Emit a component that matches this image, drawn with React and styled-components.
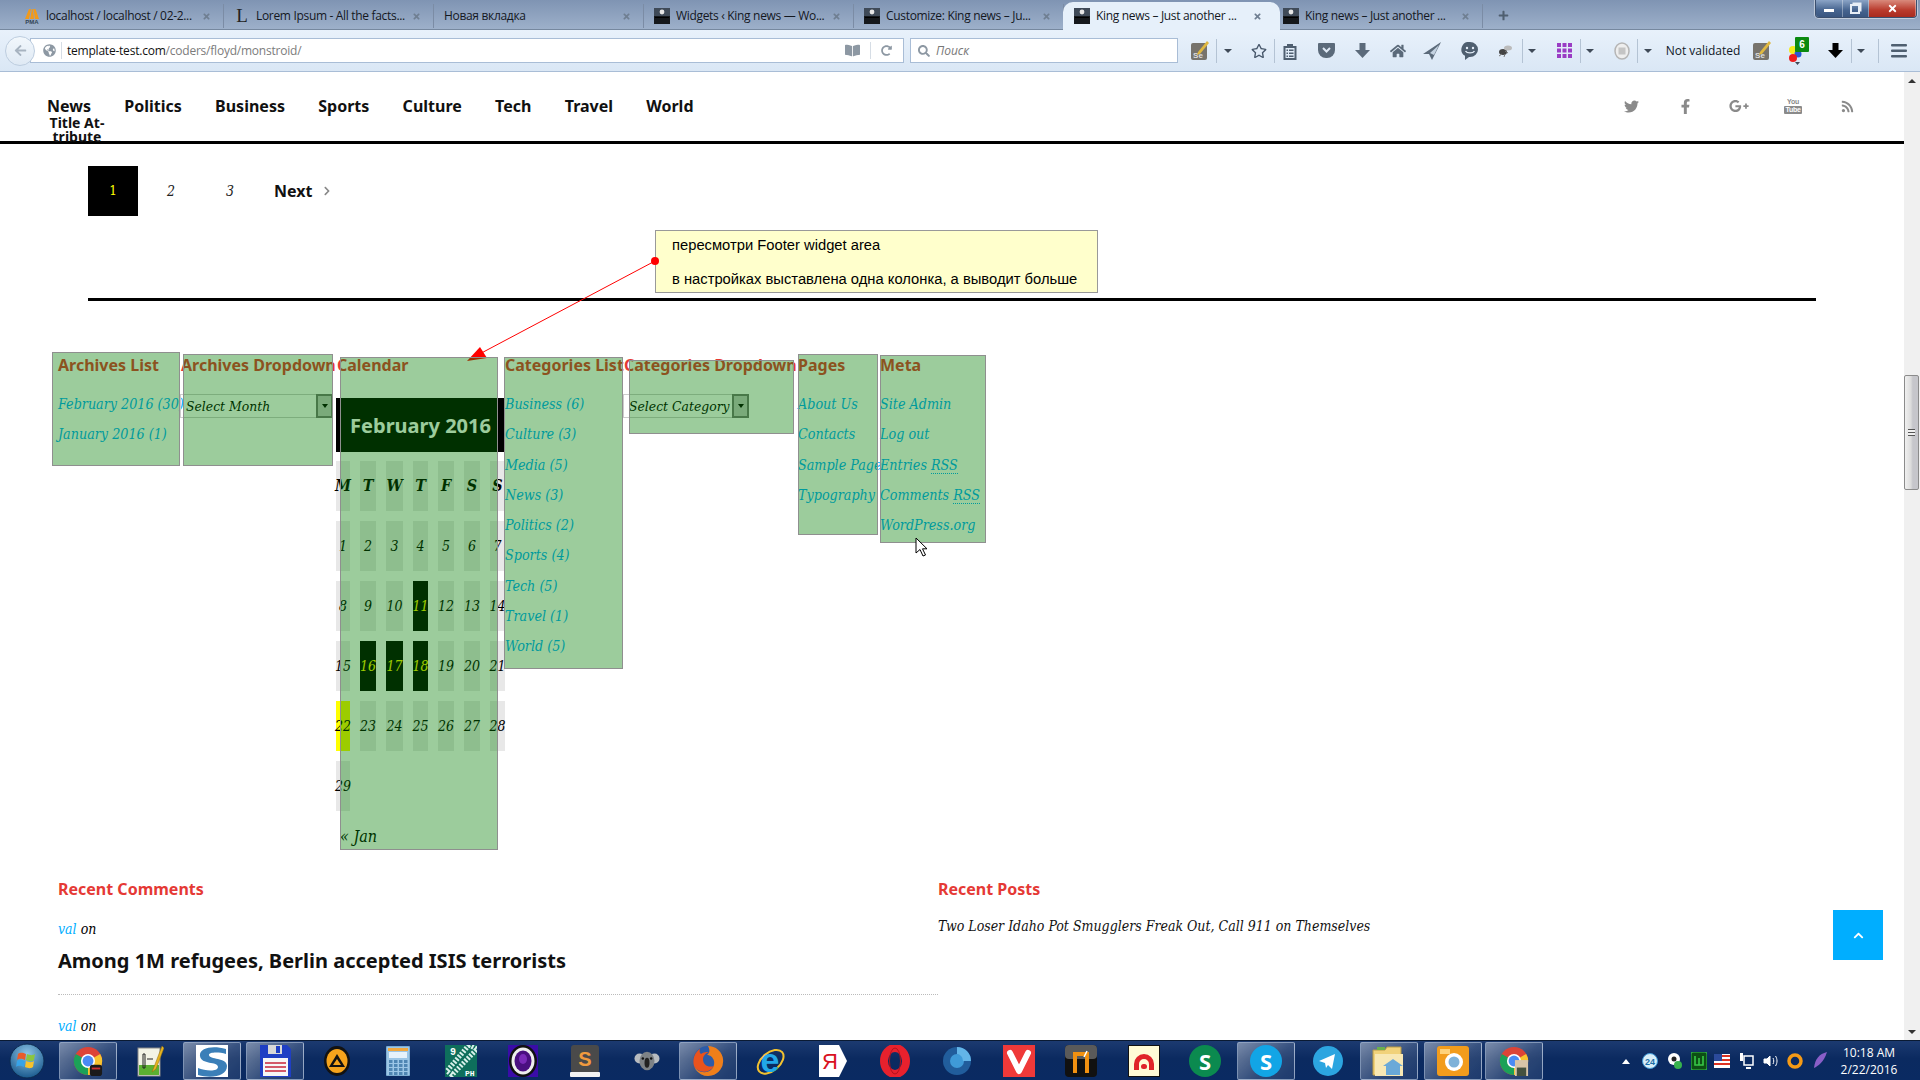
import styled, { createGlobalStyle } from 'styled-components'
import {
	FaTwitter,
	FaFacebookF,
	FaGooglePlusG,
	FaRss,
	FaChevronRight,
	FaChevronUp,
	FaSearch,
	FaArrowLeft,
	FaRedoAlt,
	FaBookOpen,
	FaGlobeAmericas,
	FaRegStar,
	FaHome,
	FaPlus,
	FaTimes,
} from 'react-icons/fa'

const GlobalStyle = createGlobalStyle`
	html, body {
		margin: 0;
		padding: 0;
		background: #fff;
	}
	* {
		box-sizing: border-box;
	}
`

const serif = `'DejaVu Serif Condensed', 'DejaVu Serif', serif`

// lays items out by flow: turns wanted centres into left margins
const placeInRow = (items, start) => {
	let prevEnd = start
	return items.map(item => {
		const ml = item.c - item.w / 2 - prevEnd
		prevEnd = item.c + item.w / 2
		return { ...item, ml }
	})
}

const Thumb = () => (
	<svg width='16' height='16' viewBox='0 0 16 16'>
		<rect width='16' height='16' fill='#15181c' />
		<rect width='16' height='8' fill='#3f4a58' />
		<circle cx='8' cy='4' r='2.4' fill='#e6e6e6' />
		<rect x='1' y='9' width='14' height='1' fill='#000' />
	</svg>
)

const PmaIcon = () => (
	<svg width='16' height='16' viewBox='0 0 16 16'>
		<path d='M1 11 5 1h2l-2 10zM6 11 8 1h1l1 10zM11 11 9.500 1h2L15 11z' fill='#f29a1a' />
		<text x='8' y='16' fontSize='6' fontWeight='700' fill='#345' textAnchor='middle' fontFamily='Liberation Sans, sans-serif'>
			PMA
		</text>
	</svg>
)

const LoremIcon = styled.span`
	width: 16px;
	font: 400 19px/20px 'Liberation Serif', serif;
	color: #222;
	text-align: center;
`

const tabs = [
	{ title: 'localhost / localhost / 02-2...', icon: <PmaIcon /> },
	{ title: 'Lorem Ipsum - All the facts...', icon: <LoremIcon>L</LoremIcon> },
	{ title: 'Новая вкладка' },
	{ title: 'Widgets ‹ King news — Wo...', icon: <Thumb /> },
	{ title: 'Customize: King news – Ju...', icon: <Thumb /> },
	{ title: 'King news – Just another ...', icon: <Thumb />, active: true },
	{ title: 'King news – Just another ...', icon: <Thumb /> },
]

const DropArrow = styled.span`
	display: block;
	width: 0;
	height: 0;
	border-left: 4px solid transparent;
	border-right: 4px solid transparent;
	border-top: 4px solid #3f4a58;
`

const ToolSep = styled.span`
	display: block;
	width: 1px;
	height: 24px;
	background: #b4c3d4;
`

const SeIcon = () => (
	<svg width='20' height='22' viewBox='0 0 20 22'>
		<rect x='1' y='3' width='16' height='17' rx='2' fill='#77736c' />
		<path d='M8 12 17 1l2 2-9 11-3 1z' fill='#e0b840' />
		<text x='8' y='18' fontSize='8' fontWeight='700' fill='#ddd' textAnchor='middle' fontFamily='Liberation Sans, sans-serif'>
			Se
		</text>
	</svg>
)

const ClipIcon = () => (
	<svg width='16' height='18' viewBox='0 0 16 18' fill='#4f5f70'>
		<path d='M5 2h6v2h3.500v14h-13V4H5zM3.500 6v10h9V6z' />
		<path d='M4.500 7.500h1.500v1.500H4.500zM7 7.500h4.500v1.500H7zM4.500 10.500h1.500V12H4.500zM7 10.500h4.500V12H7zM4.500 13.500h1.500V15H4.500zM7 13.500h4.500V15H7z' />
	</svg>
)

const PocketIcon = () => (
	<svg width='17' height='15' viewBox='0 0 17 15'>
		<path d='M1 0h15a1 1 0 0 1 1 1v6a8 8 0 0 1-8 8h-1a8 8 0 0 1-8-8V1a1 1 0 0 1 1-1z' fill='#5b6a7a' />
		<path d='m5 5 3.500 3.500L12 5' stroke='#dfe9f5' strokeWidth='2' fill='none' />
	</svg>
)

const BlockArrow = ({ color }) => (
	<svg width='15' height='15' viewBox='0 0 15 15' fill={color}>
		<path d='M4.500 0h6v7h4.500l-7.500 8L0 7h4.500z' />
	</svg>
)

const SendIcon = () => (
	<svg width='20' height='18' viewBox='0 0 20 18'>
		<path d='M19 0 1 12l6 0 3 6zM9 11l1 4 2-2z' fill='#5b6a7a' />
		<path d='M17 3 8 11l4 2z' fill='#c5d3e2' />
	</svg>
)

const ChatIcon = () => (
	<svg width='18' height='18' viewBox='0 0 18 18'>
		<path d='M9 0a8 7.500 0 0 1 0 15H8l-4 3v-4.200A7.500 7.500 0 0 1 9 0z' fill='#4f5f70' />
		<circle cx='6' cy='6' r='1.200' fill='#e4eef9' />
		<circle cx='12' cy='6' r='1.200' fill='#e4eef9' />
		<path d='M4.500 9c1.500 2.500 7.500 2.500 9 0' stroke='#e4eef9' strokeWidth='1.400' fill='none' />
	</svg>
)

const FlyIcon = () => (
	<svg width='16' height='14' viewBox='0 0 16 14'>
		<ellipse cx='6' cy='8' rx='4' ry='3' fill='#444' />
		<ellipse cx='11' cy='4' rx='4' ry='2.500' fill='#bbb' />
		<path d='M2 12 5 10M7 13l1-3M11 9 8 7' stroke='#777' />
	</svg>
)

const GridIcon = () => (
	<svg width='15' height='15' viewBox='0 0 15 15' fill='#9a3cc4'>
		{[0, 5.5, 11].map(x =>
			[0, 5.5, 11].map(y => <rect key={`${x}-${y}`} x={x} y={y} width='4' height='4' />)
		)}
	</svg>
)

const StopIcon = () => (
	<svg width='16' height='18' viewBox='0 0 16 18'>
		<ellipse cx='8' cy='9' rx='7' ry='8' fill='#eee' stroke='#b5b5b5' strokeWidth='1.500' />
		<rect x='4.500' y='5.500' width='7' height='7' fill='#c4c4c4' />
	</svg>
)

const DotsIcon = () => (
	<svg width='28' height='28' viewBox='0 0 28 28'>
		<circle cx='7' cy='13' r='4' fill='#f5ee1e' />
		<circle cx='12' cy='17' r='3.500' fill='#2a5ad8' />
		<circle cx='7' cy='21' r='4' fill='#ee1c1c' />
		<path d='m9 25 5 0-2.500 3z' fill='#3f4a58' />
		<rect x='9' y='0' width='14' height='15' rx='1' fill='#0b8a10' />
		<text x='16' y='11' fontSize='10' fontWeight='700' fill='#fff' textAnchor='middle' fontFamily='Liberation Sans, sans-serif'>
			6
		</text>
	</svg>
)

const BurgerIcon = () => (
	<svg width='16' height='14' viewBox='0 0 16 14' fill='#4f5f70'>
		<rect width='16' height='2.500' rx='1' />
		<rect y='5.500' width='16' height='2.500' rx='1' />
		<rect y='11' width='16' height='2.500' rx='1' />
	</svg>
)

const StatusText = styled.span`
	font: 400 12px/16px 'Open Sans', sans-serif;
	color: #101828;
	white-space: nowrap;
`

const toolItems = placeInRow(
	[
		{ c: 1200, w: 20, node: <SeIcon /> },
		{ c: 1216, w: 1, node: <ToolSep /> },
		{ c: 1228, w: 8, node: <DropArrow /> },
		{ c: 1259, w: 16, node: <FaRegStar size={16} color='#46566a' /> },
		{ c: 1274, w: 1, node: <ToolSep /> },
		{ c: 1290, w: 16, node: <ClipIcon /> },
		{ c: 1326, w: 17, node: <PocketIcon /> },
		{ c: 1362, w: 15, node: <BlockArrow color='#5b6a7a' /> },
		{ c: 1398, w: 16, node: <FaHome size={16} color='#5b6a7a' /> },
		{ c: 1432, w: 20, node: <SendIcon /> },
		{ c: 1470, w: 18, node: <ChatIcon /> },
		{ c: 1505, w: 16, node: <FlyIcon /> },
		{ c: 1522, w: 1, node: <ToolSep /> },
		{ c: 1532, w: 8, node: <DropArrow /> },
		{ c: 1564, w: 15, node: <GridIcon /> },
		{ c: 1580, w: 1, node: <ToolSep /> },
		{ c: 1590, w: 8, node: <DropArrow /> },
		{ c: 1622, w: 16, node: <StopIcon /> },
		{ c: 1637, w: 1, node: <ToolSep /> },
		{ c: 1648, w: 8, node: <DropArrow /> },
		{ c: 1703, w: 72, node: <StatusText>Not validated</StatusText> },
		{ c: 1762, w: 20, node: <SeIcon /> },
		{ c: 1800, w: 28, node: <DotsIcon /> },
		{ c: 1835, w: 15, node: <BlockArrow color='#000' /> },
		{ c: 1851, w: 1, node: <ToolSep /> },
		{ c: 1861, w: 8, node: <DropArrow /> },
		{ c: 1878, w: 1, node: <ToolSep /> },
		{ c: 1899, w: 16, node: <BurgerIcon /> },
	],
	1178
)

// taskbar drawings
const Chrome = ({ badge }) => (
	<svg width='30' height='30' viewBox='0 0 32 32'>
		<circle cx='16' cy='16' r='15' fill='#dc4437' />
		<path d='M16 16 29 8.500A15 15 0 0 1 16 31Z' fill='#f7c42f' />
		<path d='M16 16V31A15 15 0 0 1 3 8.500Z' fill='#1ba158' />
		<circle cx='16' cy='16' r='7.500' fill='#fff' />
		<circle cx='16' cy='16' r='5.800' fill='#4a8af4' />
		{badge === 'ninja' && <rect x='18' y='20' width='13' height='12' rx='3' fill='#1a1a1a' />}
		{badge === 'ninja' && <rect x='20' y='23' width='9' height='2' fill='#c33' />}
		{badge === 'face' && <rect x='17' y='15' width='14' height='17' fill='#d8c4a8' />}
		{badge === 'face' && <rect x='19' y='23' width='10' height='9' fill='#45513f' />}
	</svg>
)

const Orb = () => (
	<svg width='36' height='36' viewBox='0 0 36 36'>
		<defs>
			<radialGradient id='orbFill' cx='50%' cy='30%' r='70%'>
				<stop offset='0%' stopColor='#8fc6e8' />
				<stop offset='100%' stopColor='#1a5a8e' />
			</radialGradient>
		</defs>
		<circle cx='18' cy='18' r='17' fill='url(#orbFill)' stroke='#0c2a50' />
		<path d='M9 11c3-2 5-1 8 0l-1 6c-3-1-5-2-8 0z' fill='#ea5b2a' />
		<path d='M18 11c3 1 5 2 8 0l-1 6c-3 2-5 1-8 0z' fill='#8cc63f' />
		<path d='M8 18c3-2 5-1 8 0l-1 6c-3-1-5-2-8 0z' fill='#37a3e8' />
		<path d='M17 18c3 1 5 2 8 0l-1 6c-3 2-5 1-8 0z' fill='#f8c22d' />
	</svg>
)

const NotepadIcon = () => (
	<svg width='28' height='32' viewBox='0 0 28 32'>
		<rect x='2' y='3' width='22' height='28' fill='#f3f3e6' stroke='#888' />
		<rect x='3' y='20' width='20' height='10' fill='#5cb031' />
		<path d='M7 9v14h2V9zM11 14h6' stroke='#222' strokeWidth='1' fill='none' />
		<path d='M26 1 18 22l-2 5 4-3 8-21z' fill='#e6b422' stroke='#8a6a10' strokeWidth='.5' />
	</svg>
)

const SBox = () => (
	<svg width='32' height='32' viewBox='0 0 32 32'>
		<rect width='32' height='32' fill='#fff' />
		<path d='M30 4C16 0 3 3 4 11c1 9 18 5 18 11 0 5-13 4-20 1v7c14 4 29 1 29-9 0-9-18-6-18-11 0-3 10-3 17-1z' fill='#3b7fb8' />
	</svg>
)

const Floppy = () => (
	<svg width='32' height='32' viewBox='0 0 32 32'>
		<path d='M1 0h27l4 4v28H1z' fill='#1f3fc4' />
		<rect x='9' y='0' width='14' height='9' fill='#d8d8d8' />
		<rect x='17' y='1' width='4' height='7' fill='#1f3fc4' />
		<rect x='4' y='13' width='25' height='18' fill='#f6f6f6' />
		<path d='M6 18h21M6 22h21M6 26h21' stroke='#c8243a' strokeWidth='1.500' />
	</svg>
)

const Aimp = () => (
	<svg width='30' height='30' viewBox='0 0 30 30'>
		<ellipse cx='15' cy='15' rx='13' ry='15' fill='#121212' />
		<ellipse cx='15' cy='15' rx='10.500' ry='12' fill='#f5a31c' />
		<path d='M15 8 23 21H7z' fill='#121212' />
		<path d='M15 13 19 19H11z' fill='#f5a31c' />
	</svg>
)

const Calc = () => (
	<svg width='24' height='30' viewBox='0 0 24 30'>
		<rect width='24' height='30' rx='1.500' fill='#9cc6e6' stroke='#5f93bd' />
		<rect x='2' y='2' width='20' height='3' fill='#f0a840' />
		<rect x='3' y='6' width='18' height='6' fill='#e6f2fb' />
		{[14, 18, 22, 26].map(y =>
			[3, 8, 13, 18].map(x => <rect key={`${x}-${y}`} x={x} y={y} width='3.500' height='3' fill='#4f86b3' />)
		)}
	</svg>
)

const NinePh = () => (
	<svg width='32' height='32' viewBox='0 0 32 32'>
		<rect width='32' height='32' fill='#0e6f5c' />
		<path d='M24 0 2 26l5 4L32 4z' fill='none' stroke='#d8f0ea' strokeWidth='5' strokeDasharray='2 1.500' />
		<text x='5' y='10' fontSize='10' fontWeight='700' fill='#fff' fontFamily='Liberation Mono, monospace'>
			9
		</text>
		<text x='20' y='31' fontSize='8' fontWeight='700' fill='#fff' fontFamily='Liberation Mono, monospace'>
			PH
		</text>
	</svg>
)

const Lens = () => (
	<svg width='30' height='32' viewBox='0 0 30 32'>
		<rect width='30' height='32' fill='#3a0ca8' />
		<ellipse cx='15' cy='16' rx='14' ry='16' fill='#111' />
		<ellipse cx='15' cy='16' rx='11.500' ry='13.500' fill='#eee' />
		<ellipse cx='15' cy='16' rx='8.500' ry='10.500' fill='#4a0f80' />
		<ellipse cx='15' cy='14' rx='4' ry='5' fill='#7a2ab8' />
	</svg>
)

const Sublime = () => (
	<svg width='30' height='32' viewBox='0 0 30 32'>
		<rect x='1' y='0' width='28' height='28' rx='3' fill='#4a4a4a' />
		<rect x='0' y='27' width='30' height='5' rx='1' fill='#f2f2f2' />
		<text x='15' y='21' fontSize='20' fontWeight='700' fill='#f09a3e' textAnchor='middle' fontFamily='Liberation Sans, sans-serif'>
			S
		</text>
	</svg>
)

const Koala = () => (
	<svg width='26' height='20' viewBox='0 0 30 24'>
		<circle cx='6' cy='9' r='6' fill='#b8bcc0' />
		<circle cx='24' cy='9' r='6' fill='#b8bcc0' />
		<ellipse cx='15' cy='12' rx='9' ry='11' fill='#7d8286' />
		<ellipse cx='15' cy='14' rx='3' ry='6' fill='#222' />
		<circle cx='10' cy='9' r='1.500' fill='#111' />
		<circle cx='20' cy='9' r='1.500' fill='#111' />
	</svg>
)

const Firefox = () => (
	<svg width='32' height='32' viewBox='0 0 32 32'>
		<circle cx='16' cy='16' r='15' fill='#2c5ba8' />
		<path d='M16 1a15 15 0 1 1-14 20c2 4 7 7 12 6 6-1 9-6 8-11-1-4-4-6-7-6 3-2 3-5 1-9z' fill='#ef7f1a' />
		<path d='M2 21C0 14 3 7 8 4c-1 3 0 4 1 5 3-2 5-2 8-2-3 1-6 4-6 7 0 6 5 9 11 7-3 5-9 7-14 5-3-1-5-3-6-5z' fill='#e9531d' />
	</svg>
)

const Ie = () => (
	<svg width='32' height='32' viewBox='0 0 32 32'>
		<ellipse cx='16' cy='17' rx='15' ry='9' fill='none' stroke='#f2c230' strokeWidth='2' transform='rotate(-40 16 16)' />
		<text x='16' y='27' fontSize='34' fontWeight='700' fill='#22a7e8' textAnchor='middle' fontFamily='Liberation Sans, sans-serif'>
			e
		</text>
	</svg>
)

const Yandex = () => (
	<svg width='28' height='32' viewBox='0 0 28 32'>
		<path d='M0 0h20l8 16-8 16H0z' fill='#fff' />
		<text x='11' y='24' fontSize='22' fill='#d9121f' textAnchor='middle' fontFamily='Liberation Sans, sans-serif'>
			Я
		</text>
	</svg>
)

const Opera = () => (
	<svg width='30' height='32' viewBox='0 0 30 32'>
		<ellipse cx='15' cy='16' rx='11' ry='13' fill='none' stroke='#e8212d' strokeWidth='8' />
		<ellipse cx='15' cy='16' rx='5.500' ry='13' fill='none' stroke='#b3121c' strokeWidth='1' />
	</svg>
)

const BlueGlobe = () => (
	<svg width='30' height='32' viewBox='0 0 30 32'>
		<circle cx='15' cy='16' r='14' fill='#215d9c' />
		<circle cx='15' cy='16' r='7' fill='#3f9ad8' />
		<path d='M15 2a14 14 0 0 1 14 14h-8a7 7 0 0 0-6-7z' fill='#63b5e8' />
	</svg>
)

const Vivaldi = () => (
	<svg width='32' height='32' viewBox='0 0 32 32'>
		<rect width='32' height='32' fill='#ef3939' />
		<path d='M7 8 16 26 25 8' fill='none' stroke='#fff' strokeWidth='6' strokeLinecap='round' strokeLinejoin='round' />
	</svg>
)

const Nimbus = () => (
	<svg width='32' height='32' viewBox='0 0 32 32'>
		<rect width='32' height='32' rx='4' fill='#111' />
		<rect y='0' width='32' height='14' rx='4' fill='#5a5a5a' />
		<path d='M10 28V9h12v19' fill='none' stroke='#f29111' strokeWidth='4' />
		<path d='M19 12l3-6' stroke='#fff' strokeWidth='1.500' />
	</svg>
)

const RedArc = () => (
	<svg width='32' height='32' viewBox='0 0 32 32'>
		<rect width='32' height='32' fill='#fffbd6' stroke='#111' strokeWidth='2' />
		<path d='M6 25V19a10 10 0 0 1 20 0v6h-5v-6a5 5 0 0 0-10 0v6z' fill='#e0242a' />
		<rect x='13' y='19' width='6' height='5' rx='2.500' fill='#e0242a' />
	</svg>
)

const RoundLetter = styled.span`
	display: flex;
	align-items: center;
	justify-content: center;
	width: 32px;
	height: 32px;
	border-radius: 50%;
	background: ${props => props.$bg};
	color: #fff;
	font: 700 22px/32px 'Open Sans', sans-serif;
`

const Telegram = () => (
	<svg width='30' height='30' viewBox='0 0 30 30'>
		<circle cx='15' cy='15' r='15' fill='#2ca5e0' />
		<path d='M6 15 22 8l-3 15-4-4-2 3-1-5z' fill='#fff' />
	</svg>
)

const Explorer = () => (
	<svg width='36' height='34' viewBox='0 0 36 34'>
		<path d='M2 6h12l2-3h14v28H2z' fill='#f1d27a' stroke='#b89a46' />
		<path d='M6 3h8v3H6z' fill='#6ab04c' />
		<rect x='4' y='10' width='28' height='22' fill='#f8e8b4' />
		<path d='M12 22 22 15l10 7h-3v9H15v-9z' fill='#6aa9d8' />
	</svg>
)

const Camera = () => (
	<svg width='32' height='30' viewBox='0 0 32 30'>
		<rect width='32' height='30' rx='3' fill='#f29c1c' />
		<rect x='3' y='3' width='10' height='5' fill='#ffd27a' />
		<circle cx='17' cy='16' r='9' fill='#fff' />
		<circle cx='17' cy='16' r='5.500' fill='#7fb2d8' />
	</svg>
)

const TrayBadge = () => (
	<svg width='16' height='16' viewBox='0 0 16 16'>
		<circle cx='8' cy='8' r='7.500' fill='#d8eef8' stroke='#3f9ad8' />
		<text x='8' y='11.500' fontSize='9' fontWeight='700' fill='#1b6fa8' textAnchor='middle' fontFamily='Liberation Sans, sans-serif'>
			24
		</text>
	</svg>
)

const TrayGear = () => (
	<svg width='16' height='18' viewBox='0 0 16 18'>
		<circle cx='7' cy='7' r='6' fill='#fff' />
		<circle cx='7' cy='7' r='2.500' fill='#222' />
		<circle cx='11' cy='13' r='4' fill='#37b24d' />
	</svg>
)

const TrayW = () => (
	<svg width='16' height='18' viewBox='0 0 16 18'>
		<rect width='16' height='18' rx='2' fill='#0d4f14' stroke='#38c848' />
		<path d='M4 4v9h8V4M8 6v7' stroke='#38c848' strokeWidth='1.600' fill='none' />
	</svg>
)

const TrayFlag = () => (
	<svg width='16' height='14' viewBox='0 0 16 14'>
		<rect width='16' height='14' fill='#fff' />
		<path d='M0 2h16M0 6h16M0 10h16' stroke='#d32' strokeWidth='2' />
		<rect width='8' height='7' fill='#2b4a9b' />
	</svg>
)

const TrayNet = () => (
	<svg width='16' height='18' viewBox='0 0 16 18' fill='#fff'>
		<rect x='5' y='4' width='9' height='9' fill='none' stroke='#fff' strokeWidth='1.500' />
		<rect x='1' y='1' width='3' height='8' />
		<rect x='7' y='15' width='5' height='2' />
	</svg>
)

const TraySound = () => (
	<svg width='16' height='16' viewBox='0 0 16 16' fill='none' stroke='#fff'>
		<path d='M1 6h3l3-3v10l-3-3H1z' fill='#fff' />
		<path d='M10 5c1 2 1 4 0 6M12.500 3c2 3 2 7 0 10' />
	</svg>
)

const TrayOrange = () => (
	<svg width='16' height='16' viewBox='0 0 16 16'>
		<circle cx='8' cy='8' r='6' fill='none' stroke='#f59a16' strokeWidth='3.500' />
	</svg>
)

const TrayFeather = () => (
	<svg width='16' height='18' viewBox='0 0 16 18'>
		<path d='M15 0C7 2 3 7 2 16c4-2 10-6 13-16z' fill='#8a5fc8' />
	</svg>
)

const TrayUp = styled.span`
	display: block;
	width: 0;
	height: 0;
	border-left: 4px solid transparent;
	border-right: 4px solid transparent;
	border-bottom: 5px solid #fff;
`

const Clock = styled.span`
	display: block;
	color: #fff;
	font: 400 12px/17px 'Open Sans', sans-serif;
	text-align: center;
	white-space: nowrap;
`

const taskItems = placeInRow(
	[
		{ c: 27, w: 36, node: <Orb /> },
		{ c: 88, w: 58, btn: true, node: <Chrome badge='ninja' /> },
		{ c: 150, w: 58, node: <NotepadIcon /> },
		{ c: 212, w: 58, btn: true, node: <SBox /> },
		{ c: 275, w: 58, btn: true, node: <Floppy /> },
		{ c: 337, w: 58, node: <Aimp /> },
		{ c: 398, w: 58, node: <Calc /> },
		{ c: 461, w: 58, node: <NinePh /> },
		{ c: 523, w: 58, node: <Lens /> },
		{ c: 585, w: 58, node: <Sublime /> },
		{ c: 647, w: 58, node: <Koala /> },
		{ c: 708, w: 58, btn: true, node: <Firefox /> },
		{ c: 770, w: 58, node: <Ie /> },
		{ c: 833, w: 58, node: <Yandex /> },
		{ c: 895, w: 58, node: <Opera /> },
		{ c: 957, w: 58, node: <BlueGlobe /> },
		{ c: 1019, w: 58, node: <Vivaldi /> },
		{ c: 1081, w: 58, node: <Nimbus /> },
		{ c: 1144, w: 58, node: <RedArc /> },
		{ c: 1205, w: 58, node: <RoundLetter $bg='#0b8a4f'>S</RoundLetter> },
		{ c: 1266, w: 58, btn: true, node: <RoundLetter $bg='#12a5e6'>S</RoundLetter> },
		{ c: 1328, w: 58, node: <Telegram /> },
		{ c: 1389, w: 58, btn: true, node: <Explorer /> },
		{ c: 1453, w: 58, btn: true, node: <Camera /> },
		{ c: 1514, w: 58, btn: true, node: <Chrome badge='face' /> },
		{ c: 1626, w: 8, node: <TrayUp /> },
		{ c: 1650, w: 16, node: <TrayBadge /> },
		{ c: 1675, w: 16, node: <TrayGear /> },
		{ c: 1699, w: 16, node: <TrayW /> },
		{ c: 1722, w: 16, node: <TrayFlag /> },
		{ c: 1747, w: 16, node: <TrayNet /> },
		{ c: 1771, w: 16, node: <TraySound /> },
		{ c: 1795, w: 16, node: <TrayOrange /> },
		{ c: 1820, w: 16, node: <TrayFeather /> },
		{
			c: 1869,
			w: 70,
			node: (
				<Clock>
					10:18 AM
					<br />
					2/22/2016
				</Clock>
			),
		},
	],
	0
)

const navLinks = ['News', 'Politics', 'Business', 'Sports', 'Culture', 'Tech', 'Travel', 'World']

const calHead = ['M', 'T', 'W', 'T', 'F', 'S', 'S']
const calDays = Array.from({ length: 29 }, (_, i) => i + 1)
const linkedDays = [11, 16, 17, 18]

const App = () => {
	return (
		<Screen>
			<GlobalStyle />
			<TabStrip>
				{tabs.map(tab => (
					<Tab key={tab.title + tab.active} $active={tab.active}>
						{tab.icon && <TabIcon>{tab.icon}</TabIcon>}
						<TabTitle>{tab.title}</TabTitle>
						<FaTimes size={9} color='#6f7f92' />
					</Tab>
				))}
				<NewTab>
					<FaPlus size={11} color='#4f5f70' />
				</NewTab>
				<WindowControls>
					<WinBtn>
						<MinGlyph />
					</WinBtn>
					<WinBtn>
						<MaxGlyph />
					</WinBtn>
					<WinBtn $close>
						<FaTimes size={11} color='#fff' />
					</WinBtn>
				</WindowControls>
			</TabStrip>
			<Toolbar>
				<BackButton>
					<FaArrowLeft size={13} color='#a7b3c0' />
				</BackButton>
				<UrlBox>
					<FaGlobeAmericas size={13} color='#8d98a3' />
					<UrlDivider />
					<UrlText>
						template-test.com<UrlPath>/coders/floyd/monstroid/</UrlPath>
					</UrlText>
					<UrlActions>
						<FaBookOpen size={15} color='#8d98a3' />
						<UrlDivider />
						<FaRedoAlt size={11} color='#8d98a3' />
					</UrlActions>
				</UrlBox>
				<SearchBox>
					<FaSearch size={12} color='#8d98a3' />
					<SearchHint>Поиск</SearchHint>
				</SearchBox>
				{toolItems.map(item => (
					<ToolSlot key={item.c} $w={item.w} $ml={item.ml}>
						{item.node}
					</ToolSlot>
				))}
			</Toolbar>
			<Viewport>
				<Content>
					<Header>
						<Nav>
							{navLinks.map(link => (
								<NavLink key={link}>
									{link}
									{link === 'News' && <NavHint>Title At-tribute</NavHint>}
								</NavLink>
							))}
						</Nav>
						<Social>
							<SocialIcon>
								<FaTwitter size={15} />
							</SocialIcon>
							<SocialIcon>
								<FaFacebookF size={15} />
							</SocialIcon>
							<SocialIcon>
								<FaGooglePlusG size={20} />
							</SocialIcon>
							<SocialIcon>
								<YouTubeMark>
									<span>You</span>
									<YouTubeTube>Tube</YouTubeTube>
								</YouTubeMark>
							</SocialIcon>
							<SocialIcon>
								<FaRss size={13} />
							</SocialIcon>
						</Social>
					</Header>
					<Pagination>
						<PageCurrent>1</PageCurrent>
						<PageLink $ml={29}>2</PageLink>
						<PageLink $ml={51}>3</PageLink>
						<PageNext>
							Next
							<FaChevronRight size={10} color='#888' />
						</PageNext>
					</Pagination>
					<Rule />
					<Note>
						<p>пересмотри Footer widget area</p>
						<p>в настройках выставлена одна колонка, а выводит больше</p>
					</Note>
					<NoteArrow viewBox='0 0 200 140' width='200' height='140'>
						<line x1='193' y1='6' x2='10' y2='103' stroke='#f00' strokeWidth='1' />
						<circle cx='193' cy='6' r='4' fill='#f00' />
						<polygon points='5,106 18,92 25,103' fill='#f00' />
					</NoteArrow>
					<FooterWidgets>
						<Widget $w={123} $ox={-6} $oy={0} $ow={128} $oh={114}>
							<WidgetTitle>Archives List</WidgetTitle>
							<WidgetList>
								<li>February 2016 (30)</li>
								<li>January 2016 (1)</li>
							</WidgetList>
						</Widget>
						<Widget $w={156} $ox={2} $oy={2} $ow={150} $oh={112}>
							<WidgetTitle>Archives Dropdown</WidgetTitle>
							<FakeSelect $w={153}>
								Select Month
								<SelectArrow />
							</FakeSelect>
						</Widget>
						<Widget $w={168} $ox={3} $oy={5} $ow={158} $oh={493}>
							<WidgetTitle>Calendar</WidgetTitle>
							<CalTitle>February 2016</CalTitle>
							<CalGrid>
								{calHead.map((day, i) => (
									<CalHead key={i}>{day}</CalHead>
								))}
								{calDays.map(day => (
									<CalDay key={day} $linked={linkedDays.includes(day)} $today={day === 22}>
										{day}
									</CalDay>
								))}
							</CalGrid>
							<CalPrev>« Jan</CalPrev>
						</Widget>
						<Widget $w={119} $ox={-1} $oy={5} $ow={119} $oh={312}>
							<WidgetTitle>Categories List</WidgetTitle>
							<WidgetList>
								<li>Business (6)</li>
								<li>Culture (3)</li>
								<li>Media (5)</li>
								<li>News (3)</li>
								<li>Politics (2)</li>
								<li>Sports (4)</li>
								<li>Tech (5)</li>
								<li>Travel (1)</li>
								<li>World (5)</li>
							</WidgetList>
						</Widget>
						<Widget $w={174} $ox={5} $oy={8} $ow={165} $oh={74}>
							<WidgetTitle>Categories Dropdown</WidgetTitle>
							<FakeSelect $w={126}>
								Select Category
								<SelectArrow />
							</FakeSelect>
						</Widget>
						<Widget $w={82} $ox={0} $oy={2} $ow={80} $oh={181}>
							<WidgetTitle>Pages</WidgetTitle>
							<WidgetList>
								<li>About Us</li>
								<li>Contacts</li>
								<li>Sample Page</li>
								<li>Typography</li>
							</WidgetList>
						</Widget>
						<Widget $w={106} $ox={0} $oy={3} $ow={106} $oh={188}>
							<WidgetTitle>Meta</WidgetTitle>
							<WidgetList>
								<li>Site Admin</li>
								<li>Log out</li>
								<li>
									Entries <Rss>RSS</Rss>
								</li>
								<li>
									Comments <Rss>RSS</Rss>
								</li>
								<li>WordPress.org</li>
							</WidgetList>
						</Widget>
					</FooterWidgets>
					<RecentRow>
						<RecentCol>
							<RecentTitle>Recent Comments</RecentTitle>
							<CommentMeta>
								<CommentAuthor>val</CommentAuthor> on
							</CommentMeta>
							<CommentPost>Among 1M refugees, Berlin accepted ISIS terrorists</CommentPost>
							<CommentMeta $next>
								<CommentAuthor>val</CommentAuthor> on
							</CommentMeta>
						</RecentCol>
						<RecentCol>
							<RecentTitle>Recent Posts</RecentTitle>
							<RecentPost>Two Loser Idaho Pot Smugglers Freak Out, Call 911 on Themselves</RecentPost>
						</RecentCol>
					</RecentRow>
				</Content>
				<ScrollBar>
					<ScrollArrow $up />
					<ScrollThumb>
						<ScrollGrip />
					</ScrollThumb>
					<ScrollArrow />
				</ScrollBar>
				<BackToTop>
					<FaChevronUp size={11} color='#fff' />
				</BackToTop>
				<MouseCursor viewBox='0 0 12 20' width='12' height='20'>
					<path d='M1 1v15l4-3.500 3 6.500 2.500-1-3-6.200H12z' fill='#fff' stroke='#000' strokeWidth='1' />
				</MouseCursor>
			</Viewport>
			<Taskbar>
				{taskItems.map(item => (
					<TaskSlot key={item.c} $w={item.w} $ml={item.ml} $btn={item.btn}>
						{item.node}
					</TaskSlot>
				))}
			</Taskbar>
		</Screen>
	)
}

const Screen = styled.div`
	width: 1920px;
	height: 1080px;
	display: flex;
	flex-direction: column;
	overflow: hidden;
	background: #fff;
`

const TabStrip = styled.div`
	height: 30px;
	flex-shrink: 0;
	display: flex;
	align-items: flex-end;
	padding-left: 14px;
	background: linear-gradient(180deg, #7f94b3 0%, #9db0ca 100%);
	border-bottom: 1px solid #76889f;
`

const Tab = styled.div`
	width: ${props => (props.$active ? '217px' : '210px')};
	height: ${props => (props.$active ? '28px' : '24px')};
	margin-bottom: ${props => (props.$active ? '-1px' : '1px')};
	display: flex;
	flex-shrink: 0;
	align-items: center;
	gap: 6px;
	padding: 0 ${props => (props.$active ? '18px' : '12px')} 0 10px;
	border-right: ${props => (props.$active ? '0' : '1px solid #7b8ca5')};
	border-radius: ${props => (props.$active ? '10px 10px 0 0' : '0')};
	background: ${props => (props.$active ? '#e6f0fa' : 'transparent')};
	${props => props.$active && 'padding-left: 11px; margin-left: -1px; margin-right: -7px;'}
`

const TabIcon = styled.span`
	display: flex;
	width: 16px;
	height: 16px;
	flex-shrink: 0;
	justify-content: center;
	align-items: center;
`

const TabTitle = styled.span`
	flex: 1;
	font: 400 12px/18px 'Open Sans', sans-serif;
	letter-spacing: -0.32px;
	color: #14181f;
	white-space: nowrap;
	overflow: hidden;
`

const NewTab = styled.div`
	width: 40px;
	height: 24px;
	margin-bottom: 2px;
	display: flex;
	align-items: center;
	justify-content: center;
`

const WindowControls = styled.div`
	margin-left: auto;
	margin-right: 3px;
	align-self: flex-start;
	display: flex;
	width: 102px;
	height: 18px;
	border: 1px solid #3b4f6e;
	border-top: 0;
	border-radius: 0 0 4px 4px;
	overflow: hidden;
	box-shadow: 0 0 0 1px rgba(255, 255, 255, 0.45);
`

const WinBtn = styled.div`
	flex: ${props => (props.$close ? '0 0 47px' : '1')};
	display: flex;
	align-items: center;
	justify-content: center;
	background: ${props =>
		props.$close
			? 'linear-gradient(180deg, #d98a7c 0%, #b93a2c 60%, #a82a1e 100%)'
			: 'linear-gradient(180deg, #8ba4c6 0%, #46648f 60%, #3a5680 100%)'};
	border-right: 1px solid rgba(255, 255, 255, 0.35);
`

const MinGlyph = styled.span`
	display: block;
	width: 10px;
	height: 3px;
	margin-top: 3px;
	background: #fff;
`

const MaxGlyph = styled.span`
	display: block;
	width: 10px;
	height: 10px;
	border: 2px solid #e8eef6;
	box-shadow: 2px -2px 0 -0.5px #e8eef6;
`

const Toolbar = styled.div`
	height: 42px;
	flex-shrink: 0;
	display: flex;
	align-items: center;
	padding-left: 5px;
	background: linear-gradient(180deg, #e8f1fb 0%, #dae7f5 100%);
	border-bottom: 1px solid #a9bdd6;
`

const BackButton = styled.div`
	position: relative;
	z-index: 1;
	width: 30px;
	height: 30px;
	flex-shrink: 0;
	margin-right: -5px;
	display: flex;
	align-items: center;
	justify-content: center;
	border-radius: 50%;
	border: 1px solid #bdcddf;
	background: linear-gradient(180deg, #f2f7fc, #dfe9f4);
`

const UrlBox = styled.div`
	width: 874px;
	height: 25px;
	flex-shrink: 0;
	display: flex;
	align-items: center;
	padding: 0 11px 0 12px;
	background: #fff;
	border: 1px solid #a9bdd6;
`

const UrlDivider = styled.span`
	display: block;
	width: 1px;
	height: 17px;
	margin: 0 5px;
	background: #d6dde5;
`

const UrlText = styled.span`
	font: 400 12px/16px 'Open Sans', sans-serif;
	letter-spacing: -0.22px;
	color: #111;
`

const UrlPath = styled.span`
	color: #7c7c7c;
`

const UrlActions = styled.span`
	margin-left: auto;
	display: flex;
	align-items: center;
	gap: 5px;
`

const SearchBox = styled.div`
	width: 268px;
	height: 25px;
	flex-shrink: 0;
	margin-left: 6px;
	display: flex;
	align-items: center;
	gap: 6px;
	padding-left: 7px;
	background: #fff;
	border: 1px solid #a9bdd6;
`

const SearchHint = styled.span`
	font: italic 400 12px/16px 'Open Sans', sans-serif;
	color: #777;
`

const ToolSlot = styled.div`
	width: ${props => props.$w}px;
	margin-left: ${props => props.$ml}px;
	flex-shrink: 0;
	display: flex;
	align-items: center;
	justify-content: center;
`

const Viewport = styled.div`
	position: relative;
	flex: 1;
	min-height: 0;
	display: flex;
	overflow: hidden;
	background: #fff;
`

const Content = styled.div`
	position: relative;
	width: 1904px;
	flex-shrink: 0;
`

const Header = styled.header`
	height: 72px;
	display: flex;
	align-items: center;
	justify-content: space-between;
	padding: 0 30px 0 47px;
	border-bottom: 3px solid #000;
	margin-bottom: 22px;
`

const Nav = styled.nav`
	display: flex;
	gap: 33.3px;
	margin-top: -1px;
`

const NavLink = styled.a`
	position: relative;
	font: 700 16px/22px 'Noto Sans', sans-serif;
	color: #111;
`

const NavHint = styled.span`
	position: absolute;
	left: 0;
	top: 21px;
	width: 60px;
	font: 700 14px/14px 'Noto Sans', sans-serif;
	text-align: center;
`

const Social = styled.div`
	display: flex;
	align-items: center;
	margin-top: -1px;
`

const SocialIcon = styled.span`
	width: 54px;
	display: flex;
	justify-content: center;
	color: #8a8a8a;
`

const YouTubeMark = styled.span`
	display: flex;
	flex-direction: column;
	align-items: center;
	font: 700 7px/8px 'Liberation Sans', sans-serif;
	letter-spacing: -0.3px;
	color: #8a8a8a;
`

const YouTubeTube = styled.span`
	padding: 0 1px;
	background: #8a8a8a;
	color: #fff;
	border-radius: 1px;
`

const Pagination = styled.div`
	height: 50px;
	margin-left: 88px;
	display: flex;
	align-items: center;
`

const PageCurrent = styled.span`
	width: 50px;
	height: 50px;
	display: flex;
	align-items: center;
	justify-content: center;
	background: #000;
	color: #ff0;
	font: 400 12px/20px 'DejaVu Serif', serif;
`

const PageLink = styled.span`
	margin-left: ${props => props.$ml}px;
	font: italic 400 14px/20px ${serif};
	color: #222;
`

const PageNext = styled.span`
	margin-left: 40px;
	margin-top: -1px;
	display: flex;
	align-items: center;
	gap: 10px;
	font: 700 16px/20px 'Noto Sans', sans-serif;
	color: #111;
`

const Rule = styled.div`
	height: 3px;
	margin: 82px 88px 51px 88px;
	background: #000;
`

const NoteArrow = styled.svg`
	position: absolute;
	left: 462px;
	top: 183px;
`

const Note = styled.div`
	position: absolute;
	left: 655px;
	top: 158px;
	width: 443px;
	height: 63px;
	padding: 2px 16px;
	background: #ffc;
	border: 1px solid #999;
	font: 400 14.750px/24px 'Liberation Sans', sans-serif;
	color: #000;

	& p {
		margin: 0 0 10px;
		white-space: nowrap;
	}
`

const FooterWidgets = styled.div`
	display: flex;
	align-items: flex-start;
	padding-left: 58px;
`

const Widget = styled.section`
	position: relative;
	width: ${props => props.$w}px;
	flex-shrink: 0;
	white-space: nowrap;

	&::after {
		content: '';
		box-sizing: border-box;
		position: absolute;
		left: ${props => props.$ox}px;
		top: ${props => props.$oy}px;
		width: ${props => props.$ow}px;
		height: ${props => props.$oh}px;
		background: rgba(0, 123, 0, 0.39);
		border: 1px solid #8f8f8f;
		pointer-events: none;
	}
`

const WidgetTitle = styled.h4`
	margin: 0;
	font: 700 16px/26px 'Noto Sans', sans-serif;
	color: #e53935;
`

const WidgetList = styled.ul`
	list-style: none;
	margin: 11px 0 0;
	padding: 0;
	font: italic 400 14.200px/30.300px ${serif};
	color: #00aeff;
`

const Rss = styled.abbr`
	border-bottom: 1px dotted #00aeff;
`

const FakeSelect = styled.div`
	position: relative;
	width: ${props => props.$w}px;
	height: 24px;
	margin: 16px 0 0 -1px;
	padding-left: 5px;
	border: 1px solid #ccc;
	font: italic 400 13.800px/22px ${serif};
	color: #000;
`

const SelectArrow = styled.span`
	position: absolute;
	right: -1px;
	top: -1px;
	width: 17px;
	height: 24px;
	border: 2px solid #777;
	background: #c8c8c8;

	&::before {
		content: '';
		position: absolute;
		left: 3.500px;
		top: 8px;
		border-left: 3px solid transparent;
		border-right: 3px solid transparent;
		border-top: 4px solid #000;
	}
`

const CalTitle = styled.div`
	width: 169px;
	height: 54px;
	margin: 20px 0 9px -1px;
	padding-top: 1px;
	display: flex;
	align-items: center;
	justify-content: center;
	background: #000;
	color: #fff;
	font: 700 20px/26px 'Noto Sans', sans-serif;
`

const CalGrid = styled.div`
	width: 169px;
	margin-left: -1px;
	display: grid;
	grid-template-columns: 14px 16px 17px 15px 16px 16px 15px;
	grid-auto-rows: 50px;
	gap: 10px;
`

const CalHead = styled.div`
	display: flex;
	align-items: center;
	justify-content: center;
	background: #e8e8e8;
	color: #000;
	font: italic 700 16px/20px ${serif};
`

const CalDay = styled.div`
	display: flex;
	align-items: center;
	justify-content: center;
	white-space: nowrap;
	background: ${props => (props.$linked ? '#000' : props.$today ? '#ff0' : '#e8e8e8')};
	color: ${props => (props.$linked ? '#ff0' : '#000')};
	font: italic 400 14px/20px ${serif};
`

const CalPrev = styled.div`
	margin: 14px 0 0 3px;
	font: italic 400 16px/24px ${serif};
	color: #000;
`

const RecentRow = styled.div`
	display: flex;
	padding-left: 58px;
	margin-top: 27px;
`

const RecentCol = styled.div`
	width: 880px;
	flex-shrink: 0;
`

const RecentTitle = styled.h4`
	margin: 0;
	font: 700 16px/26px 'Noto Sans', sans-serif;
	color: #e53935;
`

const CommentMeta = styled.div`
	margin-top: ${props => (props.$next ? '19px' : '15px')};
	font: italic 400 14px/24px ${serif};
	color: #000;
`

const CommentAuthor = styled.span`
	color: #00aeff;
`

const CommentPost = styled.div`
	margin-top: 5px;
	padding-bottom: 18px;
	border-bottom: 1px dotted #bbb;
	font: 700 20px/30px 'Noto Sans', sans-serif;
	color: #111;
`

const RecentPost = styled.div`
	margin-top: 12px;
	font: italic 400 14px/24px ${serif};
	color: #111;
`

const ScrollBar = styled.div`
	width: 16px;
	flex-shrink: 0;
	display: flex;
	flex-direction: column;
	background: #f0f0f0;
`

const ScrollArrow = styled.div`
	width: 16px;
	height: 17px;
	flex-shrink: 0;
	margin-top: ${props => (props.$up ? '0' : 'auto')};
	display: flex;
	align-items: center;
	justify-content: center;

	&::before {
		content: '';
		border-left: 4px solid transparent;
		border-right: 4px solid transparent;
		${props => (props.$up ? 'border-bottom' : 'border-top')}: 4px solid #333;
	}
`

const ScrollThumb = styled.div`
	width: 15px;
	height: 115px;
	margin-top: 286px;
	flex-shrink: 0;
	display: flex;
	align-items: center;
	justify-content: center;
	border: 1px solid #8b8b8b;
	border-radius: 2px;
	background: linear-gradient(90deg, #f0f0f0 0%, #dcdcdc 45%, #c6c6cb 60%, #c6c6cb 100%);
`

const ScrollGrip = styled.span`
	display: block;
	width: 7px;
	height: 7px;
	border-top: 1px solid #555;
	border-bottom: 1px solid #555;
	background: linear-gradient(#f0f0f0 0 2px, #555 2px 3px, #f0f0f0 3px);
`

const BackToTop = styled.div`
	position: absolute;
	left: 1833px;
	top: 838px;
	width: 50px;
	height: 50px;
	display: flex;
	align-items: center;
	justify-content: center;
	background: #00aeff;
`

const MouseCursor = styled.svg`
	position: absolute;
	left: 915px;
	top: 465px;
`

const Taskbar = styled.div`
	height: 40px;
	flex-shrink: 0;
	display: flex;
	align-items: stretch;
	padding-top: 1px;
	background: linear-gradient(180deg, #1c3a70 0%, #0b2a60 45%, #0a2a62 100%);
	border-top: 1px solid #0a1a33;
`

const TaskSlot = styled.div`
	width: ${props => props.$w}px;
	margin-left: ${props => props.$ml}px;
	flex-shrink: 0;
	display: flex;
	align-items: center;
	justify-content: center;
	${props =>
		props.$btn &&
		`
		border: 1px solid rgba(200, 215, 235, 0.55);
		border-radius: 2px;
		background: linear-gradient(135deg, rgba(255, 255, 255, 0.42) 0%, rgba(255, 255, 255, 0.14) 60%, rgba(255, 255, 255, 0.08) 100%);
	`}
`

export default App
